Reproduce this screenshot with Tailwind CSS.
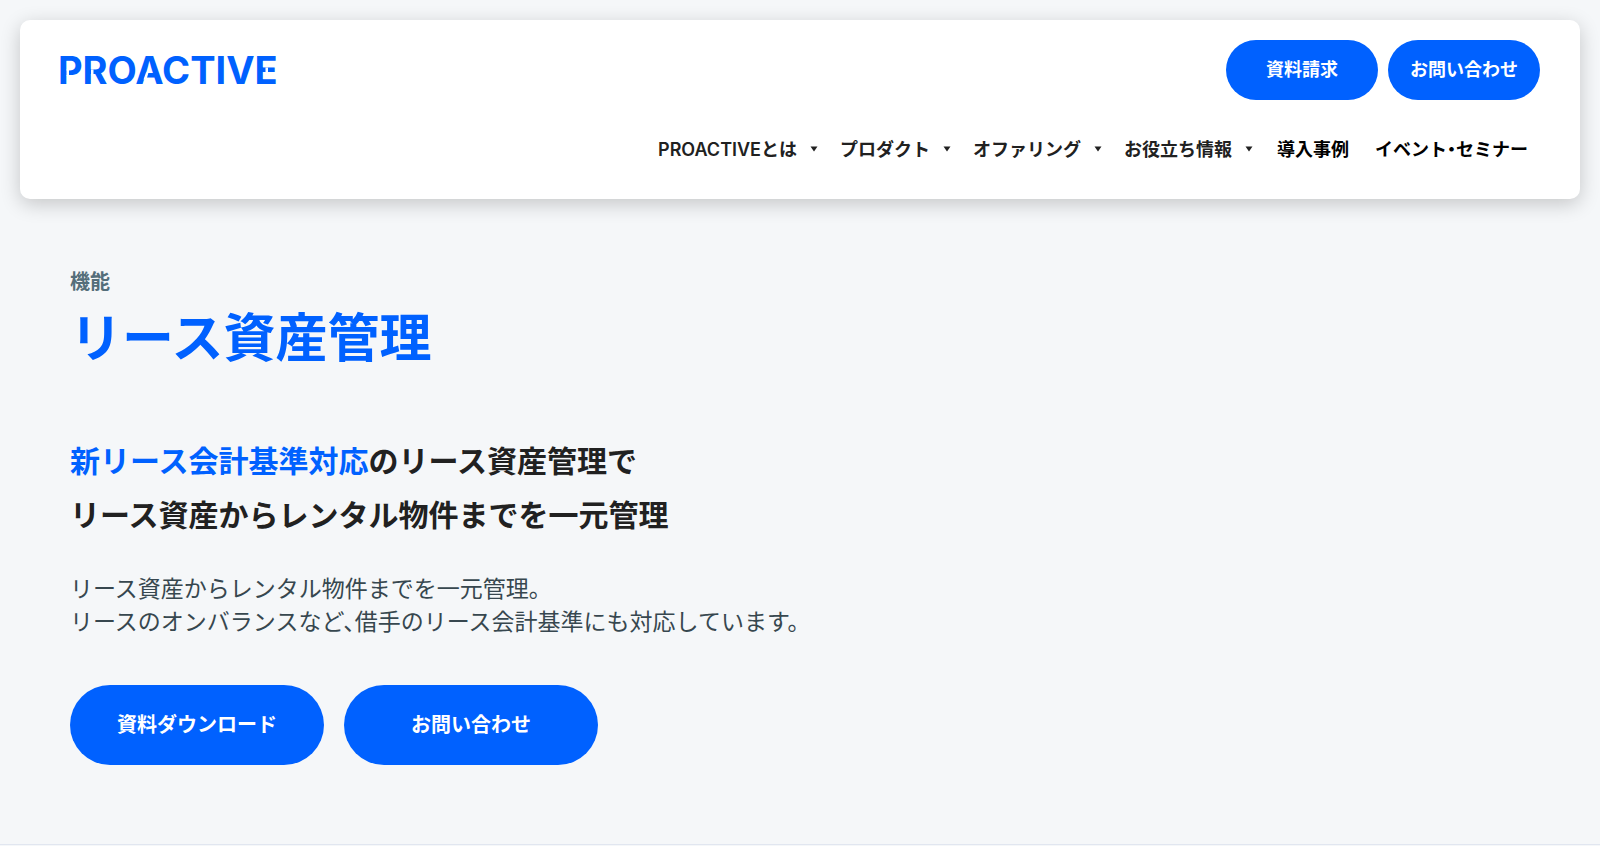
<!DOCTYPE html>
<html lang="ja">
<head>
    <meta charset="UTF-8">
    <meta name="viewport" content="width=device-width, initial-scale=1.0">
    <title>リース資産管理 | PROACTIVE</title>
    <script src="https://cdn.jsdelivr.net/npm/@tailwindcss/browser@4"></script>
</head>
<body class="bg-[#f5f7f9] text-[#212121] font-[Inter,'Noto_Sans_CJK_JP',sans-serif] [font-feature-settings:'halt']">
    <header class="m-5 px-10 pt-5 pb-[30px] bg-white rounded-[10px] shadow-[0_5px_20px_rgba(0,0,0,0.2)]">
        <div class="flex items-center justify-between">
            <a href="#" aria-label="PROACTIVE">
                <svg class="block overflow-visible" width="220" height="60" viewBox="0 0 220 60">
                    <text x="-2" y="44" fill="#0061ff" font-family="Inter, sans-serif" font-size="38" font-weight="700">PROACTIVE</text>
                    <!-- stencil cuts in P, R, A and E -->
                    <path d="M6.5 29.5h2.5v6h-2.5zM31 29.5h2.5v6h-2.5zM86 32.5h2.5l-2 7h-3zM205.5 27.5h2.5v6h-2.5z" fill="#fff"/>
                </svg>
            </a>
            <div class="flex gap-[10px]">
                <a href="#" class="flex items-center justify-center w-[152px] h-[60px] pb-0.5 rounded-full bg-[#0061ff] text-white text-[18px] font-bold">資料請求</a>
                <a href="#" class="flex items-center justify-center w-[152px] h-[60px] pb-0.5 rounded-full bg-[#0061ff] text-white text-[18px] font-bold">お問い合わせ</a>
            </div>
        </div>
        <nav class="mt-[29px] h-10 flex items-center justify-end gap-[22px] pr-3 text-[18px] font-semibold whitespace-nowrap">
            <a href="#" class="flex items-center gap-[13px]">PROACTIVEとは
                <svg width="8" height="6" viewBox="0 0 8 6"><path d="M0.5 0.5h7L4 5.5z" fill="#212121"/></svg>
            </a>
            <a href="#" class="flex items-center gap-[13px]">プロダクト
                <svg width="8" height="6" viewBox="0 0 8 6"><path d="M0.5 0.5h7L4 5.5z" fill="#212121"/></svg>
            </a>
            <a href="#" class="flex items-center gap-[13px]">オファリング
                <svg width="8" height="6" viewBox="0 0 8 6"><path d="M0.5 0.5h7L4 5.5z" fill="#212121"/></svg>
            </a>
            <a href="#" class="flex items-center gap-[13px]">お役立ち情報
                <svg width="8" height="6" viewBox="0 0 8 6"><path d="M0.5 0.5h7L4 5.5z" fill="#212121"/></svg>
            </a>
            <a href="#" class="pl-0.5 text-black">導入事例</a>
            <a href="#" class="pl-1 text-black">イベント・セミナー</a>
        </nav>
    </header>

    <main class="px-[70px] pt-12 pb-[79px] border-b border-[#e1e6f0]">
        <p class="text-[20px] leading-[30px] font-semibold text-[#546e7a]">機能</p>
        <h1 class="mt-1 text-[52px] leading-[76px] font-bold text-[#0061ff]">リース資産管理</h1>
        <h2 class="mt-[57px] text-[30px] leading-[54px] font-bold">
            <span class="text-[#0061ff]">新リース会計基準対応</span>のリース資産管理で<br>
            リース資産からレンタル物件までを一元管理
        </h2>
        <p class="mt-[31px] text-[23px] leading-[33px] text-[#37474f]">
            リース資産からレンタル物件までを一元管理。<br>
            リースのオンバランスなど、借手のリース会計基準にも対応しています。
        </p>
        <div class="mt-[46px] flex gap-5">
            <a href="#" class="flex items-center justify-center w-[254px] h-20 rounded-full bg-[#0061ff] text-white text-[20px] font-bold">資料ダウンロード</a>
            <a href="#" class="flex items-center justify-center w-[254px] h-20 rounded-full bg-[#0061ff] text-white text-[20px] font-bold">お問い合わせ</a>
        </div>
    </main>
</body>
</html>
